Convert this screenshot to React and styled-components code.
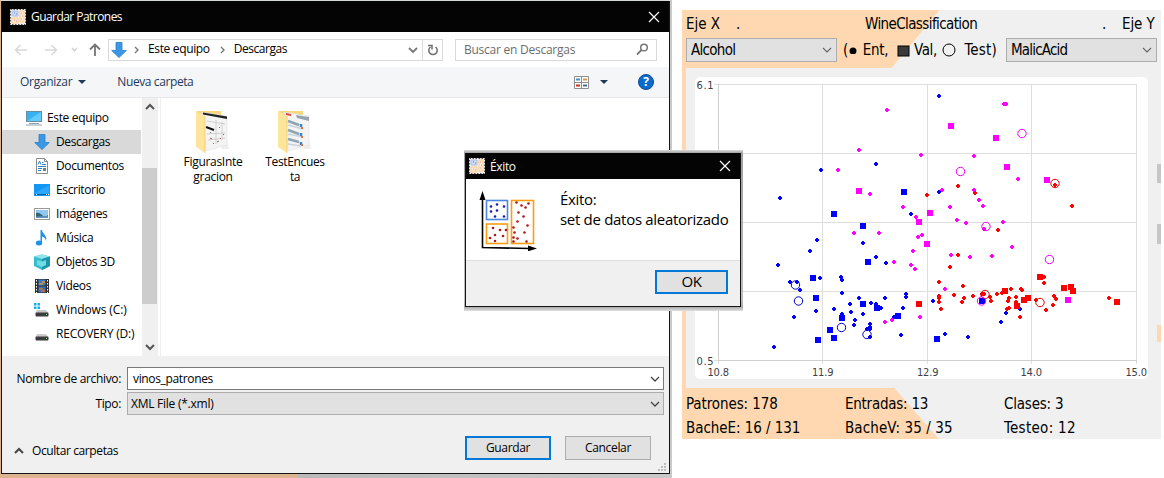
import React from "react";
import styled, { createGlobalStyle, css } from "styled-components";

const Global = createGlobalStyle`
  * { box-sizing: border-box; }
  body { margin: 0; background: #fff; overflow: hidden; }
`;

const Screen = styled.main`
  position: relative;
  display: flex;
  gap: 10px;
  width: 1164px;
  height: 478px;
  background: #fff;
  font-family: "Open Sans", "Noto Sans", sans-serif;
  font-size: 12px;
  color: #000;
`;

const Label = styled.span`
  white-space: pre;
  font-size: ${(p) => p.$size || 12}px;
  letter-spacing: ${(p) => p.$ls ?? -0.35}px;
  color: ${(p) => p.$color || "inherit"};
`;
const Gap = styled.i`
  flex: none;
  width: ${(p) => p.$w}px;
`;
const Spring = styled.i`
  flex: 1;
`;

/* ---------- save dialog ---------- */

const Backdrop = styled.div`
  flex: none;
  width: 672px;
  height: 478px;
  padding: 1px 2px 4px 1px;
  background: linear-gradient(to right, #dcb590 297px, #b9b9b9 298px, #c9c9c9);
`;
const Window = styled.section`
  display: flex;
  flex-direction: column;
  width: 669px;
  height: 473px;
  border: 1px solid #151515;
  border-top: 0;
  background: #fff;
  box-shadow: 0 -1px 0 #d5dad8;
`;
const TitleBar = styled.header`
  flex: none;
  display: flex;
  align-items: center;
  height: ${(p) => p.$h}px;
  padding: 0 9px 0 ${(p) => p.$left}px;
  gap: ${(p) => p.$gap}px;
  background: #040404;
  color: #fff;
  & > :last-child { margin-left: auto; }
`;
const NavBar = styled.div`
  flex: none;
  display: flex;
  align-items: center;
  height: 35px;
  padding: 0 12px 0 0;
`;
const NavArrows = styled.svg`
  flex: none;
  width: 106px;
  height: 22px;
`;
const Field = styled.div`
  display: flex;
  align-items: center;
  width: ${(p) => p.$w}px;
  height: ${(p) => p.$h}px;
  padding: 0 ${(p) => p.$pr || 0}px 0 ${(p) => p.$pl || 0}px;
  border: 1px solid ${(p) => p.$line || "#d9d9d9"};
  background: ${(p) => p.$bg || "#fff"};
  & > svg:last-child { margin-left: auto; }
`;
const Address = styled(Field)`
  margin-right: 12px;
  line-height: 18px;
  & > span { margin-top: -2px; }
`;
const Refresh = styled.div`
  display: grid;
  place-items: center;
  width: 20px;
  height: 20px;
  border-left: 1px solid #d9d9d9;
`;
const CommandBar = styled.div`
  flex: none;
  display: flex;
  align-items: center;
  height: 31px;
  padding: 0 15px 0 18px;
  border-bottom: 1px solid #e6e7e9;
  background: #f5f6f8;
  color: #1e395b;
  & > span { margin-top: -1px; }
`;
const HelpBadge = styled.b`
  display: grid;
  place-items: center;
  width: 16px;
  height: 16px;
  border: 1px solid #0a4a8c;
  border-radius: 50%;
  background: #0a6ccc;
  color: #fff;
  font-size: 12px;
  line-height: 14px;
`;
const Browser = styled.div`
  flex: none;
  display: flex;
  height: 258px;
`;
const Sidebar = styled.nav`
  width: 139px;
  padding-top: 8px;
`;
const SideItem = styled.div`
  display: flex;
  align-items: center;
  gap: ${(p) => (p.$root ? 5 : 6)}px;
  height: 24px;
  padding-left: ${(p) => (p.$root ? 24 : 32)}px;
  background: ${(p) => (p.$on ? "#d9d9d9" : "transparent")};
  svg { flex: none; }
  span { margin-top: -2px; }
`;
const ScrollTrack = styled.div`
  display: flex;
  flex-direction: column;
  align-items: center;
  width: 16px;
  margin-left: 1px;
  padding: 5px 0;
  background: #f0f0f0;
`;
const Thumb = styled.div`
  width: 15px;
  height: 136px;
  margin: 57px 1px auto 0;
  background: #cdcdcd;
`;
const Files = styled.div`
  flex: 1;
  display: flex;
  gap: 6px;
  margin-left: 2px;
  padding: 12px 0 0 14px;
  border-left: 1px solid #eee;
`;
const Folder = styled.figure`
  display: flex;
  flex-direction: column;
  align-items: center;
  width: 76px;
  margin: 0;
  line-height: 15px;
  text-align: center;
  svg { margin-bottom: 1px; }
`;
const Bottom = styled.footer`
  flex: 1;
  display: flex;
  flex-direction: column;
  padding: 11px 3px 0 0;
  background: #f0f0f0;
`;
const FormRow = styled.label`
  display: flex;
  align-items: center;
  justify-content: flex-end;
  gap: 6px;
  height: 23px;
  margin: 0 2px 2px 0;
`;
const Actions = styled.div`
  display: flex;
  align-items: center;
  gap: 14px;
  height: 24px;
  margin-top: 19px;
  padding: 0 15px 0 12px;
`;
const Button = styled.button`
  width: ${(p) => p.$w}px;
  height: 24px;
  padding: 0 0 2px;
  border: ${(p) => (p.$main ? "2px solid #0078d7" : "1px solid #adadad")};
  background: #e1e1e1;
  font-family: inherit;
  line-height: 18px;
  color: #000;
`;
const Toggle = styled.div`
  display: flex;
  align-items: center;
  gap: 8px;
  margin: 5px auto 0 0;
`;
const Grip = styled.svg`
  align-self: flex-end;
  margin-top: 3px;
`;

/* ---------- data panel ---------- */

const tahoma = css`
  font-family: "DejaVu Sans Condensed", "DejaVu Sans", sans-serif;
  font-stretch: condensed;
`;
const Panel = styled.section`
  flex: none;
  width: 479px;
  height: 429px;
  margin-top: 10px;
  background: #f0f0f0;
  ${tahoma}
`;
const Head = styled.div`
  height: 58px;
  padding: 2px 4px 0;
  background: linear-gradient(129.6deg, #ffd8b1 198px, #f0f0f0 199px);
`;
const HeadRow = styled.div`
  display: flex;
  align-items: center;
  height: ${(p) => p.$h}px;
`;
const Cell = styled.span`
  display: flex;
  width: ${(p) => p.$w}px;
`;
const Select = styled(Field)`
  height: 24px;
  padding: 0 4px 1px 4px;
  border-color: #adadad;
  background: #e1e1e1;
`;
const Legend = styled.div`
  display: flex;
  align-items: center;
  width: 169px;
  padding-left: 6px;
`;
const Plot = styled.div`
  display: flex;
  justify-content: space-between;
  height: 320px;
  padding: 9px 0 9px 9px;
  border-left: 4px solid #ffd8b1;
`;
const ChartCard = styled.svg`
  width: 453px;
  height: 302px;
  border-radius: 5px;
  background: #fff;
  text { ${tahoma} font-size: 11px; fill: #404048; }
`;
const EdgeMarks = styled.svg`
  width: 4px;
  height: 302px;
`;
const Stats = styled.div`
  display: grid;
  grid-template-columns: 159px 159px 1fr;
  grid-auto-rows: 24px;
  align-items: center;
  height: 51px;
  padding: 4px 4px 0;
  background: linear-gradient(48.9deg, #ffd8b1 193px, #f0f0f0 194px);
`;

/* ---------- message box ---------- */

const MessageShadow = styled.div`
  position: absolute;
  left: 464px;
  top: 150px;
  width: 279px;
  height: 161px;
  padding: 3px 2px 4px 1px;
  background: linear-gradient(#dcdcdc, #a0a0a0 3px, #bdbdbd 150px, #aaa 157px, #e0e0e0);
`;
const MessageBox = styled.section`
  width: 276px;
  height: 154px;
  border: 1px solid #151515;
  border-top: 0;
  background: #fff;
`;
const MessageBody = styled.div`
  display: flex;
  height: 82px;
  padding: 12px 0 0 12px;
  gap: 22px;
  border-bottom: 1px solid #dfdfdf;
  line-height: 20px;
  & > span { margin-top: -2px; }
`;
const MessageFoot = styled.footer`
  display: flex;
  justify-content: flex-end;
  height: 45px;
  padding: 9px 12px 0 0;
  background: #f0f0f0;
`;

/* ---------- icons ---------- */

const Chevron = ({ up, w = 10, color = "#444", sw = 1.3 }) => (
  <svg width={w} height="8" viewBox="0 0 10 8">
    <path d={up ? "M1 6L5 2L9 6" : "M1 2L5 6L9 2"} fill="none" stroke={color} strokeWidth={sw} />
  </svg>
);
const Crumb = () => (
  <svg width="5" height="8" viewBox="0 0 5 8">
    <path d="M1 1L4 4L1 7" fill="none" stroke="#777" strokeWidth="1.4" />
  </svg>
);
const Caret = () => (
  <svg width="8" height="4" viewBox="0 0 8 4">
    <path d="M0 0H8L4 4Z" fill="#1e395b" />
  </svg>
);
const Close = () => (
  <svg width="12" height="12" viewBox="0 0 12 12">
    <path d="M1 1L11 11M11 1L1 11" stroke="#fff" strokeWidth="1.2" />
  </svg>
);
const AppIcon = () => (
  <svg width="16" height="16" viewBox="0 0 16 16">
    <rect width="16" height="16" fill="#f3eee8" />
    <rect x=".5" y=".5" width="15" height="15" fill="none" stroke="#555" strokeDasharray="1.5 1.5" />
    <path d="M2 2h6v5H2z" fill="#cddaf6" stroke="#a9c0ee" />
    <path d="M2 9h6v5H2zM10 2h4v11h-4z" fill="#fbeadb" stroke="#fbcb8c" />
    <path d="M4 4h1M6 5h1" stroke="#7f7fd0" />
    <path d="M4 11h1M6 12h1M11 4h1M12 7h1M11 10h1" stroke="#e09a90" />
  </svg>
);

const icons = {
  pc: (
    <>
      <rect x=".5" y="1.5" width="15" height="10" fill="#35b2f2" stroke="#6a8ca3" />
      <path d="M1 11L15 2V11Z" fill="#61ccfb" />
      <path d="M3 13.5h10M0 15h16" stroke="#8da2b1" />
    </>
  ),
  down: <path d="M5 .5h6v8h4.3L8 15.6L.7 8.5H5z" fill="#3b98e6" stroke="#2b7fcb" strokeWidth=".8" />,
  doc: (
    <>
      <path d="M2.5.5h8l3 3v12h-11z" fill="#fff" stroke="#8b8b8b" />
      <path d="M10.5.5v3h3" fill="none" stroke="#8b8b8b" />
      <path d="M4 6.5L5.5 3L7 6.5M8 4.5h1.5M8 6.5h4M4 8.5h8M4 10.5h4M4 12.5h3" stroke="#2f83c5" fill="none" />
      <rect x="9" y="10" width="3" height="3" fill="#5d86a0" />
    </>
  ),
  desk: (
    <>
      <rect y="2" width="16" height="12" fill="#1496f5" />
      <path d="M1 11L15 3V12H1Z" fill="#2ba6fb" />
      <path d="M1 12.5h14" stroke="#0c5fa5" />
      <path d="M2 12.5h1M12 12.5h1M14 12.5h1" stroke="#fff" />
    </>
  ),
  img: (
    <>
      <rect x=".5" y="2.5" width="15" height="11" fill="#fff" stroke="#9a9a9a" />
      <rect x="2" y="4" width="12" height="8" fill="#8fc7ee" />
      <path d="M2 7Q5 6 8 9T14 9V12H2Z" fill="#2f6577" />
      <path d="M2 10.5L14 10V12H2Z" fill="#5f93b9" />
    </>
  ),
  music: (
    <>
      <path d="M6.5 0H8C8.500 4 13.500 5.500 12 11C11.500 8 9.500 7 8 6.500V13H6.500Z" fill="#1a93e8" />
      <ellipse cx="5" cy="13" rx="3.2" ry="2.500" fill="#1a93e8" />
    </>
  ),
  cube: (
    <>
      <path d="M0 2.5L8 .5L16 2.5V12L8 16L0 12Z" fill="#35bfce" />
      <path d="M0 2.5L8 .5L16 2.5L8 5Z" fill="#8fe3ea" />
      <path d="M8 5L16 2.5V12L8 16Z" fill="#1d93ab" />
      <path d="M3 6L8 7.5L12 6V11L8 13L3 11Z" fill="#6fdbe3" />
    </>
  ),
  video: (
    <>
      <rect x="1" y="1" width="14" height="14" fill="#303030" />
      <rect x="4.5" y="1.5" width="7" height="6" fill="#3c78c8" />
      <rect x="4.5" y="8.5" width="7" height="6" fill="#3c6fc0" />
      <path d="M5 6h4M8 4h3" stroke="#d89a32" strokeWidth="1.5" />
      <path d="M5 11h4M7 13h4" stroke="#c9762a" strokeWidth="1.5" />
      <path d="M2.5 2V15M13.5 2V15" stroke="#fff" strokeDasharray="1.5 1.5" />
    </>
  ),
  win: (
    <>
      <path d="M0 1h2.5v2.5H0zM3.5 1H6v2.5H3.5zM0 4.5h2.5V7H0zM3.5 4.5H6V7H3.5z" fill="#12b0ef" />
      <path d="M3 8H12L14.5 11H1.5Z" fill="#c7c7c7" />
      <rect x="1.5" y="10.5" width="13" height="4" rx="1" fill="#3c3c3c" />
      <path d="M12 12.5h1" stroke="#6fe06f" />
    </>
  ),
  drive: (
    <>
      <path d="M3 8H12L14.5 11H1.5Z" fill="#cdcdcd" />
      <rect x="1.5" y="10.5" width="13" height="4" rx="1" fill="#3c3c3c" />
      <path d="M12 12.5h1" stroke="#6fe06f" />
    </>
  ),
};
const Icon = ({ name }) => (
  <svg width="16" height="16" viewBox="0 0 16 16">
    {icons[name]}
  </svg>
);

const FolderArt = ({ survey }) => (
  <svg width="36" height="43" viewBox="0 0 36 43">
    <path d="M2 1H26V33H2Z" fill="#f7d87c" />
    <path d="M26 39L34 39L32 30Z" fill="#eee" />
    <path d="M7 2L32 6V35L11 41Z" fill="#f4f4f4" stroke="#ddd" strokeWidth=".5" />
    {survey ? (
      <>
        <path d="M9 3L14 4V6L9 5Z" fill="#e0463a" />
        <path d="M19 5L32 7V11L20 8Z" fill="#98a4ad" />
        <path d="M11 11L22 15M11 20L22 24M11 29L22 32" stroke="#8fa5b4" strokeWidth="2.5" />
        <path d="M11 15L26 19M11 24L26 27M11 34L24 36" stroke="#cbd3da" strokeWidth="1.5" />
        <path d="M24 14v3M24 23v3M24 32v3" stroke="#3a83cf" strokeWidth="2.5" />
        <path d="M25 17v2M25 26v2M25 34v2" stroke="#e5733a" strokeWidth="2" />
      </>
    ) : (
      <>
        <path d="M8 2.5L32 6.5V9L8 4.5Z" fill="#222" />
        <path d="M11 17L19 20" stroke="#111" strokeWidth="2" />
        <path d="M12 11L30 14M12 24L30 23M21 10V34M27 12V30M13 30L30 28" stroke="#d0d0d0" />
        <path d="M15 28l2 1M25 28l1 1M18 33l1 1M28 24l1 1" stroke="#b55" />
        <path d="M15 22l1 1M24 17l1 1M22 32l2-1" stroke="#777" />
      </>
    )}
    <path d="M1 1L10 6V43L1 37Z" fill="#ffe49b" />
    <path d="M10 6V43" stroke="#e9c969" strokeWidth=".7" />
  </svg>
);

const blueDots = [[5, 7], [11, 5], [18, 7], [5, 12], [11, 11], [9, 17], [18, 17]];
const lowDots = [[12, 30], [19, 32], [25, 32], [14, 37], [22, 38], [9, 40], [14, 43]];
const tallDots = [[35, 4], [40, 7], [44, 9], [47, 5], [37, 14], [42, 18], [36, 23], [46, 27], [32, 29], [33, 34], [43, 34], [32, 39], [36, 40], [45, 43], [32, 43]];
const ClusterArt = () => (
  <svg width="60" height="60" viewBox="0 0 60 60">
    <path d="M4.500 7V56.500L52 57.500" fill="none" stroke="#000" strokeWidth="1.600" />
    <path d="M4.500 0L7.500 9H1.500ZM59 57.500L50 60.300V54.500Z" fill="#000" />
    <rect x="8.500" y="9.500" width="21" height="19" fill="#fff" stroke="#4f86e0" strokeWidth="1.600" />
    <g fill="none" stroke="#ff9d10" strokeWidth="1.600">
      <rect x="8.500" y="33" width="21" height="19.500" />
      <rect x="33.500" y="9.500" width="22" height="43" />
    </g>
    {blueDots.map(([x, y]) => <circle key={`${x}-${y}`} cx={x + 8} cy={y + 8.500} r="1.300" fill="#1a1ab5" />)}
    {lowDots.map(([x, y]) => <circle key={`${x}-${y}`} cx={x + 3} cy={y + 7} r="1.300" fill="#b01818" />)}
    {tallDots.map(([x, y]) => <circle key={`${x}-${y}`} cx={x + 3.500} cy={y + 7.500} r="1.300" fill="#b01818" />)}
  </svg>
);

/* ---------- chart data ---------- */

const B = "#0000ff";
const M = "#ff00ff";
const R = "#ff0000";

const dots = [
  [B, [[876,164],[821,170],[780,198],[911,214],[939,96],[939,192],[817,240],[810,251],[863,243],[876,257],[886,263],[778,265],[820,278],[790,282],[797,282],[800,290],[841,277],[842,280],[842,293],[816,311],[794,317],[834,309],[859,298],[850,304],[871,303],[876,304],[881,308],[885,298],[906,294],[906,297],[903,308],[851,312],[863,314],[842,314],[855,320],[854,325],[774,347],[870,324],[870,327],[870,329],[870,337],[867,329],[894,317],[901,335],[933,301],[1020,309],[1006,313],[1001,322],[945,334],[968,337]]],
  [R, [[1055,185],[958,186],[927,195],[975,193],[1072,206],[998,230],[958,255],[950,267],[939,282],[963,286],[954,295],[939,296],[939,298],[939,302],[941,309],[964,298],[962,302],[973,296],[982,294],[984,294],[990,297],[991,301],[997,294],[1002,293],[1011,289],[1021,289],[1022,290],[1009,298],[1008,301],[1016,297],[1016,302],[1007,309],[1009,308],[1020,317],[1036,300],[1044,277],[1044,283],[1054,296],[1056,299],[1053,305],[1046,310],[1109,298]]],
  [M, [[887,110],[859,150],[838,170],[870,194],[903,207],[916,217],[1004,104],[1006,104],[921,155],[974,156],[1018,179],[942,190],[974,190],[979,200],[983,206],[950,207],[957,220],[966,223],[984,229],[1003,222],[854,233],[879,233],[894,262],[911,265],[915,269],[913,251],[918,237],[922,235],[885,322],[892,320],[920,317],[1012,247],[951,255],[970,257],[992,256],[945,289]]],
];
const squares = [
  [B, [[904,192],[834,214],[863,226],[868,262],[813,278],[816,298],[863,304],[877,308],[842,318],[830,330],[834,338],[818,340],[898,316],[937,339],[982,301]]],
  [R, [[919,304],[1005,291],[1017,306],[1024,300],[1028,298],[1040,277],[1064,288],[1071,287],[1073,291],[1117,302]]],
  [M, [[859,191],[919,222],[951,126],[996,138],[1007,167],[1047,180],[930,213],[927,244],[1068,300]]],
];
const rings = [
  ["#0000d0", [[795.5,285],[798.5,301],[841.5,327.5],[867,334.5]]],
  ["#e00000", [[1055,183.5],[985,294.5],[1040,302.5]]],
  ["#f000f0", [[1022,133.5],[960.5,171.5],[986,226.5],[1049.5,259.5],[981.5,301]]],
];
const gridX = [718.5, 822.5, 927.5, 1031.5, 1136.5];
const gridY = [84.5, 153.5, 222.5, 291.5, 360.5];
const ticks = [["10.8", 707.5], ["11.9", 812], ["12.9", 917], ["14.0", 1020.5], ["15.0", 1125.5]];

const Scatter = () => (
  <ChartCard viewBox="695 77 453 302">
    <g stroke="#dedede">
      {gridX.map((x) => <path key={x} d={`M${x} 84V364`} />)}
      {gridY.map((y) => <path key={y} d={`M${y === 84.5 || y === 360.5 ? 714 : 718} ${y}H1137`} />)}
    </g>
    <path d="M718.5 84V360.5H1137" fill="none" stroke="#cfcfcf" />
    <text x="696.5" y="89" textLength="17">6.1</text>
    <text x="696.5" y="365" textLength="17">0.5</text>
    {ticks.map(([t, x]) => <text key={t} x={x} y="376" textLength="21.5">{t}</text>)}
    {dots.map(([c, pts]) =>
      pts.map(([x, y]) => <path key={`${x}-${y}`} d={`M${x - 2} ${y - 1}h1v-1h2v1h1v2h-1v1h-2v-1h-1z`} fill={c} />)
    )}
    {squares.map(([c, pts]) =>
      pts.map(([x, y]) => <rect key={`${x}-${y}`} x={x - 3} y={y - 3} width="6" height="6" fill={c} />)
    )}
    {rings.map(([c, pts]) =>
      pts.map(([x, y]) => <circle key={`${x}-${y}`} cx={x} cy={y} r="4.2" fill="none" stroke={c} />)
    )}
  </ChartCard>
);

/* ---------- sections ---------- */

const places = [
  ["pc", "Este equipo"],
  ["down", "Descargas"],
  ["doc", "Documentos"],
  ["desk", "Escritorio"],
  ["img", "Imágenes"],
  ["music", "Música"],
  ["cube", "Objetos 3D"],
  ["video", "Videos"],
  ["win", "Windows (C:)", -0.1],
  ["drive", "RECOVERY (D:)", -0.2],
];

const SaveDialog = () => (
  <Backdrop>
    <Window>
      <TitleBar $h={31} $left={8} $gap={5}>
        <AppIcon />
        <Label $ls={-0.55}>Guardar Patrones</Label>
        <Close />
      </TitleBar>
      <NavBar>
        <NavArrows viewBox="2 0 106 22" fill="none">
          <path d="M27 11H16M20.5 6L15.500 11L20.500 16M45 11H56M51.500 6L56.500 11L51.500 16" stroke="#d8d8d8" strokeWidth="1.5" />
          <path d="M72 9L74.5 12L77 9" stroke="#cfcfcf" strokeWidth="1.4" />
          <path d="M95 17V6M90 10.5L95 5.5L100 10.5" stroke="#757575" strokeWidth="1.8" />
        </NavArrows>
        <Address $w={335} $h={22} $pl={2}>
          <Icon name="down" />
          <Gap $w={7} />
          <Crumb />
          <Gap $w={9} />
          <Label>Este equipo</Label>
          <Gap $w={10} />
          <Crumb />
          <Gap $w={9} />
          <Label $ls={-0.45}>Descargas</Label>
          <Spring />
          <Chevron color="#777" sw={1.8} />
          <Gap $w={4} />
          <Refresh>
            <svg width="12" height="12" viewBox="0 0 12 12">
              <path d="M3.5 3A4.2 4.2 0 1 0 8.5 3M1 1.5H5V5.5" fill="none" stroke="#6d6d6d" strokeWidth="1.5" />
            </svg>
          </Refresh>
        </Address>
        <Field $w={202} $h={22} $pl={8} $pr={7}>
          <Label $ls={-0.25} $color="#6d6d6d">Buscar en Descargas</Label>
          <svg width="13" height="13" viewBox="0 0 13 13">
            <circle cx="8" cy="4.500" r="3.300" fill="none" stroke="#777" strokeWidth="1.500" />
            <path d="M5.500 7L1 11.500" stroke="#777" strokeWidth="1.800" />
          </svg>
        </Field>
      </NavBar>
      <CommandBar>
        <Label $ls={-0.3}>Organizar</Label>
        <Gap $w={6} />
        <Caret />
        <Gap $w={31} />
        <Label $ls={-0.4}>Nueva carpeta</Label>
        <Spring />
        <svg width="15" height="13" viewBox="0 0 15 13">
          <path d="M.5.5h14v12H.5zM7.5 0V13M0 6.5H15" fill="#fff" stroke="#8f8f8f" />
          <path d="M2 3.5h4" stroke="#4b8fc5" strokeWidth="2" />
          <path d="M9 3.5h4" stroke="#d09a50" strokeWidth="2" />
          <path d="M2 9.5h4" stroke="#c8301c" strokeWidth="2" />
          <path d="M9 9.5h4" stroke="#4a6d9a" strokeWidth="2" />
        </svg>
        <Gap $w={11} />
        <Caret />
        <Gap $w={30} />
        <HelpBadge>?</HelpBadge>
      </CommandBar>
      <Browser>
        <Sidebar>
          {places.map(([icon, name, ls], i) => (
            <SideItem key={name} $root={i === 0} $on={i === 1}>
              <Icon name={icon} />
              <Label $ls={ls}>{name}</Label>
            </SideItem>
          ))}
        </Sidebar>
        <ScrollTrack>
          <Chevron up sw={2} color="#555" />
          <Thumb />
          <Chevron sw={2} color="#555" />
        </ScrollTrack>
        <Files>
          <Folder>
            <FolderArt />
            <Label $ls={-0.3}>{"FigurasInte\ngracion"}</Label>
          </Folder>
          <Folder>
            <FolderArt survey />
            <Label>{"TestEncues\nta"}</Label>
          </Folder>
        </Files>
      </Browser>
      <Bottom>
        <FormRow>
          <Label>Nombre de archivo:</Label>
          <Field $w={537} $h={23} $pl={5} $pr={3} $line="#7a7a7a">
            <Label>vinos_patrones</Label>
            <Chevron />
          </Field>
        </FormRow>
        <FormRow>
          <Label>Tipo:</Label>
          <Field $w={537} $h={23} $pl={3} $pr={3} $line="#adadad" $bg="#e1e1e1">
            <Label $ls={-0.25}>XML File (*.xml)</Label>
            <Chevron />
          </Field>
        </FormRow>
        <Actions>
          <Toggle>
            <Chevron up sw={2} />
            <Label $ls={-0.4}>Ocultar carpetas</Label>
          </Toggle>
          <Button $w={86} $main><Label>Guardar</Label></Button>
          <Button $w={86}><Label>Cancelar</Label></Button>
        </Actions>
        <Grip width="8" height="8" viewBox="0 0 8 8">
          <path d="M6 0h2v2H6zM3 3h2v2H3zM6 3h2v2H6zM0 6h2v2H0zM3 6h2v2H3zM6 6h2v2H6z" fill="#bdbdbd" />
        </Grip>
      </Bottom>
    </Window>
  </Backdrop>
);

const DataPanel = () => (
  <Panel>
    <Head>
      <HeadRow $h={24}>
        <Cell $w={50}><Label $size={15} $ls={0}>Eje X</Label></Cell>
        <Cell $w={129}><Label $size={15}>.</Label></Cell>
        <Cell $w={237}><Label $size={15} $ls={-0.6}>WineClassification</Label></Cell>
        <Cell $w={20}><Label $size={15}>.</Label></Cell>
        <Label $size={15} $ls={-0.1}>Eje Y</Label>
      </HeadRow>
      <HeadRow $h={28}>
        <Select $w={151}>
          <Label $size={15} $ls={-0.7}>Alcohol</Label>
          <Chevron color="#666" sw={1.1} />
        </Select>
        <Legend>
          <Label $size={15}>(</Label>
          <Gap $w={1} />
          <svg width="8" height="8" viewBox="0 0 8 8"><circle cx="4" cy="5" r="3.5" /></svg>
          <Gap $w={2} />
          <Label $size={15}> Ent, </Label>
          <Gap $w={5} />
          <svg width="13" height="13" viewBox="0 0 13 13"><rect x="1" y="2" width="11" height="10" fill="#3a3a3a" stroke="#000" /></svg>
          <Label $size={15}> Val, </Label>
          <Gap $w={1} />
          <svg width="14" height="14" viewBox="0 0 14 14"><circle cx="7" cy="7" r="6" fill="none" stroke="#000" /></svg>
          <Gap $w={4} />
          <Label $size={15} $ls={0.2}> Test)</Label>
        </Legend>
        <Select $w={151}>
          <Label $size={15} $ls={-0.8}>MalicAcid</Label>
          <Chevron color="#666" sw={1.1} />
        </Select>
      </HeadRow>
    </Head>
    <Plot>
      <Scatter />
      <EdgeMarks viewBox="0 77 4 302">
        <rect y="164" width="4" height="19" fill="#c6c6c6" />
        <rect y="224" width="4" height="20" fill="#c6c6c6" />
        <rect y="325" width="4" height="17" fill="#ffd8b1" />
      </EdgeMarks>
    </Plot>
    <Stats>
      <Label $size={15} $ls={-0.1}>Patrones: 178</Label>
      <Label $size={15} $ls={-0.25}>Entradas: 13</Label>
      <Label $size={15} $ls={-0.2}>Clases: 3</Label>
      <Label $size={15} $ls={-0.05}>BacheE: 16 / 131</Label>
      <Label $size={15} $ls={0.1}>BacheV: 35 / 35</Label>
      <Label $size={15} $ls={0.3}>Testeo: 12</Label>
    </Stats>
  </Panel>
);

const Message = () => (
  <MessageShadow>
    <MessageBox>
      <TitleBar $h={26} $left={3} $gap={5}>
        <AppIcon />
        <Label>Éxito</Label>
        <Close />
      </TitleBar>
      <MessageBody>
        <ClusterArt />
        <Label $size={15} $ls={-0.3}>{"Éxito:\nset de datos aleatorizado"}</Label>
      </MessageBody>
      <MessageFoot>
        <Button $w={73} $main><Label $size={15}>OK</Label></Button>
      </MessageFoot>
    </MessageBox>
  </MessageShadow>
);

export default function App() {
  return (
    <Screen>
      <Global />
      <SaveDialog />
      <DataPanel />
      <Message />
    </Screen>
  );
}
